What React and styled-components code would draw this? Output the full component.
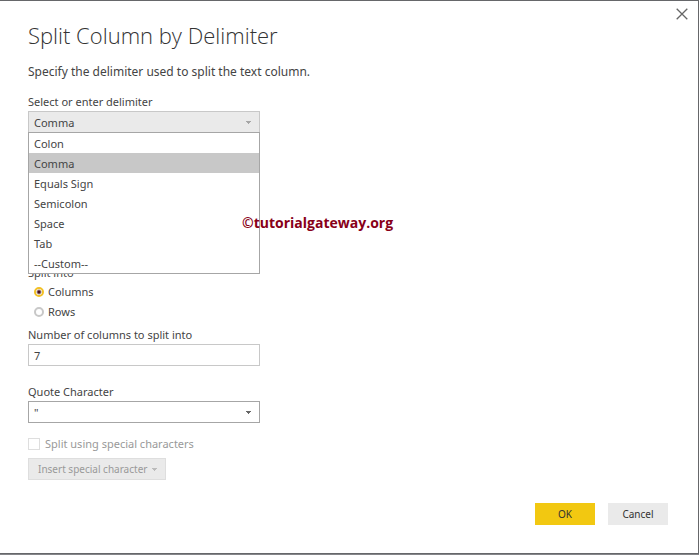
import React, { useState } from 'react'
import styled, { createGlobalStyle } from 'styled-components'

const GlobalStyle = createGlobalStyle`
  * {
    box-sizing: border-box;
  }
  body {
    margin: 0;
    background-color: #85868a;
    color: #444;
    font-family: 'Noto Sans', 'Open Sans', sans-serif;
    font-size: 11px;
  }
  button, input, select {
    font: inherit;
    color: inherit;
    margin: 0;
  }
`
const Dialog = styled.main`
  position: relative;
  display: flex;
  flex-direction: column;
  min-height: calc(100vh - 1px);
  padding: 18px 30px 28px 28px;
  background-color: #fff;
  border: 1px solid #66676a;
  border-left: none;
`
const CloseButton = styled.button`
  position: absolute;
  top: 4px;
  right: 7px;
  display: flex;
  padding: 3px;
  border: none;
  background: none;
  color: #666;
`
const Title = styled.h1`
  margin: 0;
  color: #333;
  font-family: 'Open Sans', sans-serif;
  font-size: 22px;
  line-height: 32px;
  font-weight: 300;
`
const Intro = styled.p`
  margin: 11px 0;
  font-size: 12px;
  line-height: 20px;
`
const Form = styled.form`
  display: flex;
  flex: 1;
  flex-direction: column;
`
const Field = styled.div`
  position: relative;
  display: flex;
  flex-direction: column;
  width: 232px;
  max-width: 100%;
  margin-bottom: ${props => props.$gap}px;
`
const Label = styled.label`
  line-height: 18px;
`
const SelectBox = styled.div`
  display: grid;
  align-items: center;

  > * {
    grid-area: 1 / 1;
  }
  > svg {
    justify-self: end;
    margin-right: 9px;
    pointer-events: none;
    color: ${props => (props.$open ? '#a6a6a6' : '#666')};
  }
`
const Select = styled.select`
  appearance: none;
  width: 100%;
  height: 22px;
  padding: 0 5px;
  border: 1px solid ${props => (props.$open ? '#c8c8c8' : '#a6a6a6')};
  border-radius: 0;
  outline: none;
  background-color: ${props => (props.$open ? '#eaeaea' : '#fff')};
`
const Options = styled.ul`
  position: absolute;
  top: 100%;
  left: 0;
  right: 0;
  z-index: 1;
  margin: -1px 0 0;
  padding: 0;
  border: 1px solid #a6a6a6;
  background-color: #fff;
  list-style: none;
`
const Option = styled.li`
  padding: 2px 5px 0;
  line-height: 18px;
  cursor: pointer;
  background-color: ${props => (props.$selected ? '#c8c8c8' : '#fff')};
`
const TextInput = styled.input`
  height: 22px;
  padding: 0 5px;
  border: 1px solid #c8c8c8;
  border-radius: 0;
  outline: none;
`
const Fieldset = styled.fieldset`
  min-width: 0;
  margin: 0 0 4px;
  padding: 0;
  border: none;
`
const Legend = styled.legend`
  padding: 0;
  line-height: 18px;
`
const Choice = styled.label`
  display: flex;
  align-items: center;
  gap: 4px;
  padding-left: 6px;
  line-height: 20px;
`
const Radio = styled.input`
  appearance: none;
  width: 10px;
  height: 10px;
  border: 2px solid #c8c8c8;
  border-radius: 50%;
  background-color: #fff;

  &:checked {
    border-color: #f2c025;
    background-clip: padding-box;
    background-image: radial-gradient(circle, #4a1420 1px, #fff 3px);
  }
`
const CheckRow = styled.label`
  display: flex;
  align-items: center;
  gap: 5px;
  margin-bottom: 4px;
  line-height: 20px;
  color: #999;
`
const Checkbox = styled.input`
  appearance: none;
  width: 12px;
  height: 12px;
  border: 1px solid #dedede;
  background-color: #fff;
`
const InsertButton = styled.button`
  display: flex;
  align-items: center;
  justify-content: space-between;
  align-self: flex-start;
  width: 138px;
  height: 22px;
  padding: 0 8px 0 9px;
  border: 1px solid #dedede;
  background-color: #eaeaea;
  color: #999;
  font-size: 10px;
  white-space: nowrap;

  svg {
    color: #bbb;
  }
`
const Footer = styled.footer`
  display: flex;
  justify-content: flex-end;
  gap: 13px;
  margin-top: auto;
`
const ActionButton = styled.button`
  width: 60px;
  height: 22px;
  padding: 0;
  border: none;
  background-color: ${props => (props.$primary ? '#f2c811' : '#eaeaea')};
  color: #333;
  font-size: 10px;
`
const Watermark = styled.span`
  position: absolute;
  top: 212px;
  left: 242px;
  z-index: 2;
  color: #880018;
  font-family: 'Open Sans', sans-serif;
  font-size: 14px;
  font-weight: 700;
  line-height: 20px;
  pointer-events: none;
`
const CaretIcon = styled.svg`
  flex: none;
  width: 5px;
  height: 3px;
`

const delimiters = ['Colon', 'Comma', 'Equals Sign', 'Semicolon', 'Space', 'Tab', '--Custom--']

const Caret = () => (
  <CaretIcon viewBox="0 0 5 3" aria-hidden="true">
    <path d="M0 0h5v1H4v1H3v1H2V2H1V1H0z" fill="currentColor" />
  </CaretIcon>
)

const App = () => {
  const [delimiter, setDelimiter] = useState('Comma')
  const [isOpen, setIsOpen] = useState(true)
  const [splitInto, setSplitInto] = useState('Columns')
  const [count, setCount] = useState('7')

  const handlePick = name => {
    setDelimiter(name)
    setIsOpen(false)
  }

  const handleToggle = e => {
    e.preventDefault()
    setIsOpen(!isOpen)
  }

  return (
    <>
      <GlobalStyle />
      <Dialog>
        <CloseButton type="button" aria-label="Close">
          <svg width="12" height="12" viewBox="0 0 12 12" aria-hidden="true">
            <path d="M.7.7l10.6 10.6M11.3.7L.7 11.3" stroke="currentColor" strokeWidth="1.3" />
          </svg>
        </CloseButton>
        <Title>Split Column by Delimiter</Title>
        <Intro>Specify the delimiter used to split the text column.</Intro>
        <Form onSubmit={e => e.preventDefault()}>
          <Field $gap={131}>
            <Label htmlFor="delimiter">Select or enter delimiter</Label>
            <SelectBox $open={isOpen}>
              <Select
                id="delimiter"
                $open={isOpen}
                value={delimiter}
                onMouseDown={handleToggle}
                onChange={e => setDelimiter(e.target.value)}
              >
                {delimiters.map(name => (
                  <option key={name}>{name}</option>
                ))}
              </Select>
              <Caret />
            </SelectBox>
            {isOpen && (
              <Options role="listbox" aria-label="Delimiters">
                {delimiters.map(name => (
                  <Option
                    key={name}
                    role="option"
                    aria-selected={name === delimiter}
                    $selected={name === delimiter}
                    onClick={() => handlePick(name)}
                  >
                    {name}
                  </Option>
                ))}
              </Options>
            )}
          </Field>
          <Fieldset>
            <Legend>Split into</Legend>
            {['Columns', 'Rows'].map(name => (
              <Choice key={name}>
                <Radio
                  type="radio"
                  name="splitInto"
                  checked={splitInto === name}
                  onChange={() => setSplitInto(name)}
                />
                {name}
              </Choice>
            ))}
          </Fieldset>
          <Field $gap={17}>
            <Label htmlFor="count">Number of columns to split into</Label>
            <TextInput id="count" value={count} onChange={e => setCount(e.target.value)} />
          </Field>
          <Field $gap={11}>
            <Label htmlFor="quote">Quote Character</Label>
            <SelectBox>
              <Select id="quote">
                <option>"</option>
              </Select>
              <Caret />
            </SelectBox>
          </Field>
          <CheckRow>
            <Checkbox type="checkbox" disabled />
            Split using special characters
          </CheckRow>
          <InsertButton type="button" disabled>
            Insert special character
            <Caret />
          </InsertButton>
          <Footer>
            <ActionButton $primary>OK</ActionButton>
            <ActionButton type="button">Cancel</ActionButton>
          </Footer>
        </Form>
        <Watermark>©tutorialgateway.org</Watermark>
      </Dialog>
    </>
  )
}

export default App
